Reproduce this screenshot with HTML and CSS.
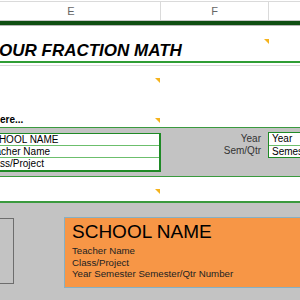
FILE: index.html
```html
<!DOCTYPE html>
<html lang="en">
<head>
  <meta charset="UTF-8">
  <title>Your Fraction Math</title>
  <link rel="stylesheet" href="styles.css">
</head>
<body>
  <div class="sheet">
    <div class="col-head">
      <div class="col col-e">E</div>
      <div class="col col-f">F</div>
      <div class="col col-g"></div>
    </div>
    <div class="rule-dark"></div>

    <div class="title-row">
      <span class="title">OUR FRACTION MATH</span>
      <span class="flag flag-title"></span>
    </div>
    <div class="rule-green"></div>

    <div class="blank-row">
      <span class="flag flag-a"></span>
      <span class="hint">ere...</span>
    </div>

    <div class="info-band">
      <div class="info-box">
        <div class="info-line">SCHOOL NAME</div>
        <div class="info-line">Teacher Name</div>
        <div class="info-line">Class/Project</div>
      </div>
      <div class="term">
        <div class="term-labels">
          <span>Year</span>
          <span>Sem/Qtr</span>
        </div>
        <div class="term-box">
          <div class="term-line">Year</div>
          <div class="term-line">Semes</div>
        </div>
      </div>
      <span class="flag flag-b"></span>
    </div>

    <div class="blank-row short">
      <span class="flag flag-c"></span>
    </div>

    <div class="preview">
      <div class="frame"></div>
      <div class="card">
        <div class="card-school">SCHOOL NAME</div>
        <div class="card-line">Teacher Name</div>
        <div class="card-line">Class/Project</div>
        <div class="card-line">Year Semester Semester/Qtr Number</div>
      </div>
    </div>
  </div>
</body>
</html>
```

FILE: styles.css
```css
/* Page */
body {
  margin: 0;
  font-family: 'Liberation Sans', Arial, sans-serif;
  background: #fff;
  color: #000;
}
.sheet {
  width: 300px;
  height: 300px;
  overflow: hidden;
  position: relative;
}

/* Column header */
.col-head {
  display: flex;
  height: 18px;
  margin-top: 1px;
  border-top: 1px solid #dadada;
  border-bottom: 1px solid #c8c8c8;
  background: #fff;
}
.col {
  flex-shrink: 0;
  font-size: 11px;
  color: #666;
  text-align: center;
  line-height: 18px;
  border-right: 1px solid #dadada;
}
.col-e {
  width: 178px;
  margin-left: -18px;
}
.col-f {
  width: 107px;
}
.col-g {
  flex: 1;
  border-right: none;
}
.rule-dark {
  height: 4px;
  background: #0f4f12;
  border-bottom: 1px solid #b5b5b5;
}

/* Title */
.title-row {
  height: 35px;
  position: relative;
  display: flex;
  align-items: flex-end;
}
.title {
  font-size: 17px;
  font-weight: bold;
  font-style: italic;
  line-height: 17px;
  margin-left: -1px;
  margin-bottom: 2px;
  white-space: nowrap;
}
.rule-green {
  height: 2px;
  background: #2f9e35;
  border-bottom: 2px solid #fff;
}

/* Comment flags */
.flag {
  position: absolute;
  width: 5px;
  height: 5px;
  background: #f5b31d;
  clip-path: polygon(0 0, 100% 0, 100% 100%);
}
.flag-title {
  left: 264px;
  top: 13px;
}
.flag-a {
  left: 155px;
  top: 12px;
}
.flag-b {
  left: 155px;
  top: -10px;
}
.flag-c {
  left: 155px;
  top: 12px;
}

/* Blank rows */
.blank-row {
  height: 61px;
  position: relative;
  border-top: 1px solid #d8d8d8;
}
.blank-row.short {
  height: 24px;
  border-top: none;
}
.hint {
  position: absolute;
  left: 0;
  bottom: 1px;
  font-size: 10px;
  line-height: 12px;
  font-weight: bold;
}

/* School info band */
.info-band {
  position: relative;
  display: flex;
  justify-content: space-between;
  align-items: flex-start;
  height: 43px;
  background: #c3c3c3;
  border-top: 1px solid #3a9a3e;
  border-bottom: 1px solid #3a9a3e;
  padding-top: 5px;
}
.info-box {
  width: 159px;
  background: #fff;
  border: 1px solid #1f8a26;
  border-left: none;
  border-right-width: 2px;
  border-bottom-width: 2px;
  overflow: hidden;
}
.info-line {
  height: 11px;
  font-size: 10px;
  line-height: 11px;
  margin-left: -15px;
  white-space: nowrap;
  border-bottom: 1px solid #6cbf6c;
}
.info-line:last-child {
  height: 12px;
  border-bottom: none;
}
.term {
  display: flex;
  gap: 7px;
  margin-top: -1px;
}
.term-labels {
  display: flex;
  flex-direction: column;
  align-items: flex-end;
  font-size: 10px;
  line-height: 12px;
  color: #333;
  padding-top: 1px;
}
.term-box {
  width: 31px;
  background: #fff;
  border: 1px solid #1f8a26;
  border-right: none;
  overflow: hidden;
}
.term-line {
  height: 11px;
  font-size: 10px;
  line-height: 11px;
  padding-left: 3px;
  white-space: nowrap;
}
.term-line:first-child {
  height: 12px;
  line-height: 12px;
  border-bottom: 1px solid #6cbf6c;
}

/* Preview */
.preview {
  height: 83px;
  background: #c3c3c3;
  border-top: 2px solid #3a9a3e;
  display: flex;
  align-items: flex-start;
  gap: 50px;
  padding-top: 14px;
}
.frame {
  width: 13px;
  height: 64px;
  margin-top: 1px;
  border: 1px solid #6d6d6d;
  border-left: none;
}
.card {
  flex: 1;
  height: 66px;
  background: #f79646;
  border: 1px solid #86b0c4;
  border-right: none;
  padding: 3px 0 0 7px;
}
.card-school {
  font-size: 19px;
  line-height: 22px;
  margin-bottom: 2px;
}
.card-line {
  font-size: 9.7px;
  line-height: 11.5px;
  color: #222;
  white-space: nowrap;
}
```
